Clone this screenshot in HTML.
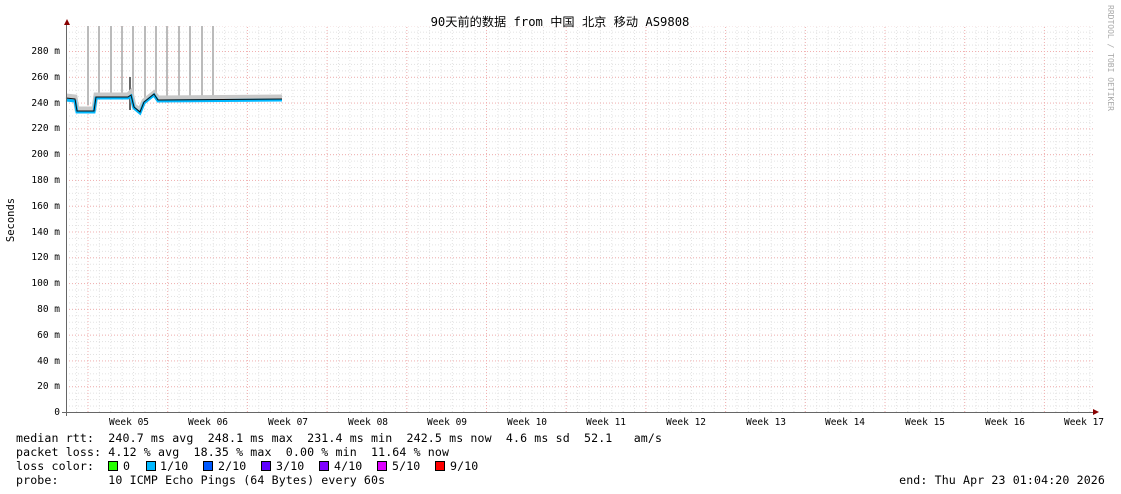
<!DOCTYPE html>
<html><head><meta charset="utf-8"><style>
body{margin:0;background:#fff;width:1121px;height:494px;overflow:hidden;position:relative}
svg{position:absolute;left:0;top:0}
.m{font-family:"DejaVu Sans Mono","Liberation Mono",monospace}
.lg{position:absolute;left:16px;font-family:"DejaVu Sans Mono","Liberation Mono",monospace;font-size:11.6px;letter-spacing:0.12px;white-space:pre;line-height:14px;color:#000}
.sq{position:absolute;width:8px;height:8px;border:1px solid #000}
</style></head><body>
<svg width="1121" height="494" xmlns="http://www.w3.org/2000/svg">
<defs>
<pattern id="hm" patternUnits="userSpaceOnUse" x="0" y="412" width="1121" height="6.446"><line x1="0" y1="0.5" x2="1121" y2="0.5" stroke="#e2e2e2" stroke-width="1" stroke-dasharray="1,2"/></pattern>
<pattern id="vm" patternUnits="userSpaceOnUse" x="87.5" y="0" width="11.386" height="494"><line x1="0.5" y1="0" x2="0.5" y2="494" stroke="#e2e2e2" stroke-width="1" stroke-dasharray="1,2"/></pattern>
<pattern id="hM" patternUnits="userSpaceOnUse" x="0" y="412" width="1121" height="25.785"><line x1="0" y1="0.5" x2="1121" y2="0.5" stroke="#f2b0b0" stroke-width="1" stroke-dasharray="1,2"/></pattern>
<pattern id="vM" patternUnits="userSpaceOnUse" x="87.5" y="0" width="79.7" height="494"><line x1="0.5" y1="0" x2="0.5" y2="494" stroke="#f2b0b0" stroke-width="1" stroke-dasharray="1,2"/></pattern>
</defs>
<rect x="67" y="26" width="1026" height="386" fill="url(#hm)"/>
<rect x="67" y="26" width="1026" height="386" fill="url(#vm)"/>
<rect x="67" y="26" width="1026" height="386" fill="url(#hM)"/>
<rect x="67" y="26" width="1026" height="386" fill="url(#vM)"/>
<g stroke="#bbb" stroke-width="2">
<line x1="88" y1="26" x2="88" y2="105"/><line x1="99" y1="26" x2="99" y2="97"/><line x1="111" y1="26" x2="111" y2="97"/><line x1="122" y1="26" x2="122" y2="97"/><line x1="133" y1="26" x2="133" y2="100"/><line x1="145" y1="26" x2="145" y2="100"/><line x1="156" y1="26" x2="156" y2="97"/><line x1="167" y1="26" x2="167" y2="98"/><line x1="179" y1="26" x2="179" y2="98"/><line x1="190" y1="26" x2="190" y2="98"/><line x1="202" y1="26" x2="202" y2="98"/><line x1="213" y1="26" x2="213" y2="98"/>
</g>
<line x1="130" y1="77" x2="130" y2="110" stroke="#666" stroke-width="2"/>
<polyline fill="none" stroke="#c8c8c8" stroke-width="5" points="66,96 75,97 77,109 94,109 96,95 128,95 131,92 134,106 140,110 144,101 154,93 158,98 282,97"/>
<polyline fill="none" stroke="#00b8ff" stroke-width="3" points="66,100 75,101 77,112 94,112 96,98 128,98 131,96 134,108 140,113 144,103 154,95 158,101 282,100"/>
<polyline fill="none" stroke="#111" stroke-width="1" points="66,98 75,99 77,111 94,111 96,97 128,97 131,95 134,107 140,112 144,102 154,94 158,100 282,99"/>
<line x1="66.5" y1="22" x2="66.5" y2="416" stroke="#666"/>
<line x1="62" y1="412.5" x2="1095" y2="412.5" stroke="#666"/>
<polygon points="64,25 67,19 70,25" fill="#800"/>
<polygon points="1093,409 1099,412 1093,415" fill="#800"/>
<g class="m" font-size="9.5" fill="#000" text-anchor="end">
<text x="60" y="415">0</text><text x="60" y="389">20 m</text><text x="60" y="364">40 m</text><text x="60" y="338">60 m</text><text x="60" y="312">80 m</text><text x="60" y="286">100 m</text><text x="60" y="260">120 m</text><text x="60" y="235">140 m</text><text x="60" y="209">160 m</text><text x="60" y="183">180 m</text><text x="60" y="157">200 m</text><text x="60" y="131">220 m</text><text x="60" y="106">240 m</text><text x="60" y="80">260 m</text><text x="60" y="54">280 m</text>
</g>
<g class="m" font-size="9.5" fill="#000" text-anchor="middle">
<text x="129" y="425">Week 05</text><text x="208" y="425">Week 06</text><text x="288" y="425">Week 07</text><text x="368" y="425">Week 08</text><text x="447" y="425">Week 09</text><text x="527" y="425">Week 10</text><text x="606" y="425">Week 11</text><text x="686" y="425">Week 12</text><text x="766" y="425">Week 13</text><text x="845" y="425">Week 14</text><text x="925" y="425">Week 15</text><text x="1005" y="425">Week 16</text><text x="1084" y="425">Week 17</text>
</g>
<text x="560" y="26" text-anchor="middle" font-size="12.2" font-family="'DejaVu Sans Mono','Noto Sans CJK SC',monospace">90天前的数据 from 中国 北京 移动 AS9808</text>
<text transform="translate(14,220) rotate(-90)" text-anchor="middle" class="m" font-size="10.5">Seconds</text>
<text transform="translate(1108,5) rotate(90)" class="m" font-size="8" fill="#aaa">RRDTOOL / TOBI OETIKER</text>
</svg>
<div class="lg" style="top:431px">median rtt:  240.7 ms avg  248.1 ms max  231.4 ms min  242.5 ms now  4.6 ms sd  52.1   am/s</div>
<div class="lg" style="top:445px">packet loss: 4.12 % avg  18.35 % max  0.00 % min  11.64 % now</div>
<div class="lg" style="top:459px">loss color:</div>
<div class="lg" style="top:473px">probe:       10 ICMP Echo Pings (64 Bytes) every 60s</div>
<div class="lg" style="top:473px;left:auto;right:16px">end: Thu Apr 23 01:04:20 2026</div>
<div class="sq" style="left:108px;top:461px;background:#26ff00"></div><div class="lg" style="top:459px;left:123px">0</div>
<div class="sq" style="left:146px;top:461px;background:#00b8ff"></div><div class="lg" style="top:459px;left:160px">1/10</div>
<div class="sq" style="left:203px;top:461px;background:#0059ff"></div><div class="lg" style="top:459px;left:218px">2/10</div>
<div class="sq" style="left:261px;top:461px;background:#5e00ff"></div><div class="lg" style="top:459px;left:276px">3/10</div>
<div class="sq" style="left:319px;top:461px;background:#7e00ff"></div><div class="lg" style="top:459px;left:334px">4/10</div>
<div class="sq" style="left:377px;top:461px;background:#dd00ff"></div><div class="lg" style="top:459px;left:392px">5/10</div>
<div class="sq" style="left:435px;top:461px;background:#ff0000"></div><div class="lg" style="top:459px;left:450px">9/10</div>
</body></html>
